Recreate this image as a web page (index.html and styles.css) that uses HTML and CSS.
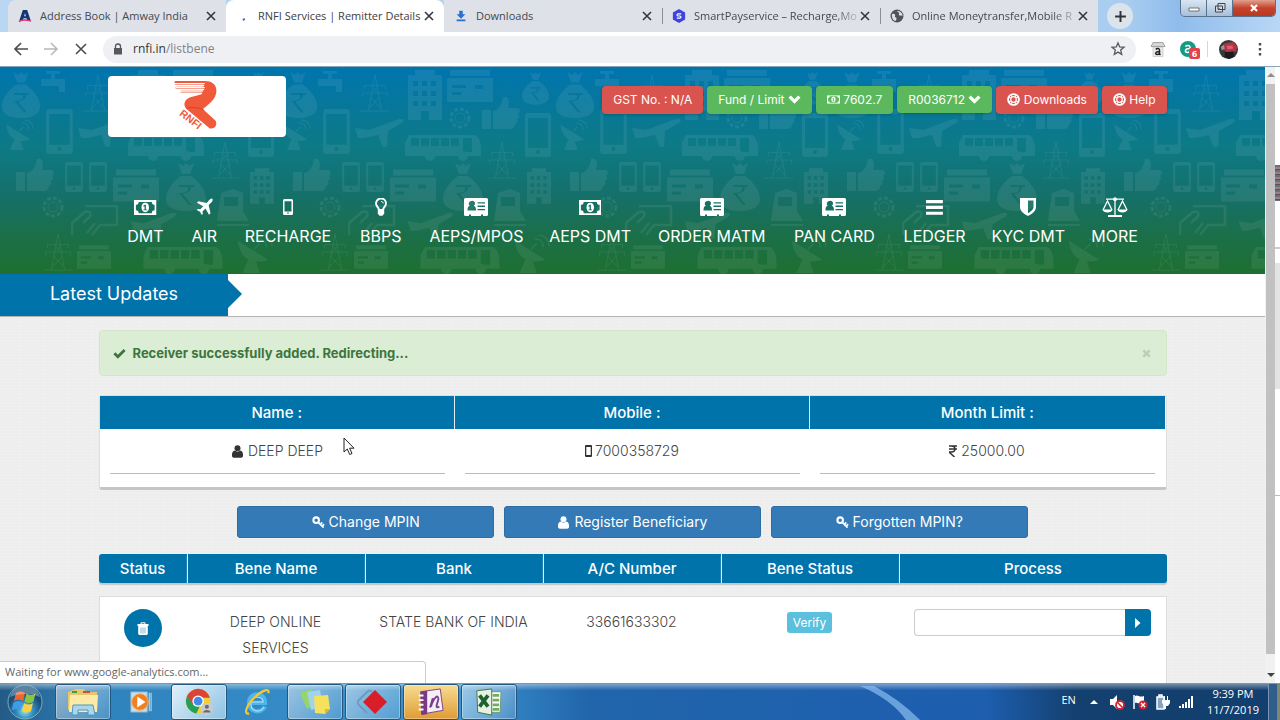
FILE: index.html
```html
<!DOCTYPE html>
<html lang="en">
<head>
<meta charset="utf-8">
<title>RNFI Services | Remitter Details</title>
<link rel="stylesheet" href="styles.css">
</head>
<body>
<svg class="defs" aria-hidden="true">
  <defs>
    <symbol id="money" viewBox="0 0 24 16"><path fill="currentColor" fill-rule="evenodd" d="M0 0h24v16H0zM5 2a3 3 0 0 1-3 3v6a3 3 0 0 1 3 3h14a3 3 0 0 1 3-3V5a3 3 0 0 1-3-3zM12 3c2.600 0 4 2.200 4 5s-1.400 5-4 5-4-2.200-4-5 1.400-5 4-5zM11.400 5L9.800 6.500l.7.8.8-.6V10H10v1h4v-1h-1.300V5z"/></symbol>
    <symbol id="plane" viewBox="0 0 18 18"><path fill="currentColor" d="M17.300.7c.8.8.3 2.500-.7 3.500L13.700 7l1.800 8.300-1.500 1.500-3.500-6.300-3 2.900.3 2.600-1 1-1.800-3.300L1.700 12l1-1 2.600.3 2.900-3L1.900 4.800l1.500-1.500L11.700 5l2.500-2.900c1-1.100 2.500-2 3.100-1.400z"/></symbol>
    <symbol id="mobile" viewBox="0 0 10 16"><path fill="currentColor" fill-rule="evenodd" d="M1.500 0h7A1.500 1.500 0 0 1 10 1.500v13A1.500 1.500 0 0 1 8.500 16h-7A1.500 1.500 0 0 1 0 14.500v-13A1.500 1.500 0 0 1 1.500 0zM1.500 2.300v10.200h7V2.300zM5 13.300a.8.8 0 1 0 0 1.600.8.8 0 0 0 0-1.600z"/></symbol>
    <symbol id="bulb" viewBox="0 0 12 18"><path d="M4 12C4 9.700 1 8.400 1 5.500A5 5 0 0 1 11 5.500C11 8.400 8 9.700 8 12z" fill="none" stroke="currentColor" stroke-width="1.900"/><path d="M6 3.500c1.400 0 2.200.7 2.200 1.900" fill="none" stroke="currentColor"/><path fill="currentColor" d="M2.800 11h6.400v4.500L7.500 17.800h-3l-1.700-2.300z"/></symbol>
    <symbol id="idcard" viewBox="0 0 24 18"><path fill="currentColor" fill-rule="evenodd" d="M1.500 0h21A1.500 1.500 0 0 1 24 1.500v15a1.500 1.500 0 0 1-1.500 1.500H19v-1.500h-2V18H7v-1.500H5V18H1.500A1.500 1.500 0 0 1 0 16.500v-15A1.500 1.500 0 0 1 1.500 0zM7.500 3A2.600 2.600 0 0 0 5.800 7.700C4 8.200 3.500 9.800 3.500 12.500h8.500c0-2.700-.6-4.300-2.300-4.800A2.600 2.600 0 0 0 7.500 3zM13.500 4.300v1.300H21V4.300zm0 3.300v1.300H21V7.600zm0 3.300v1.300H21v-1.300z"/></symbol>
    <symbol id="bars" viewBox="0 0 18 16"><path fill="currentColor" d="M0 0h18v3.400H0zM0 6.200h18v3.400H0zM0 12.400h18v3.400H0z"/></symbol>
    <symbol id="shield" viewBox="0 0 16 18"><path fill="currentColor" fill-rule="evenodd" d="M0 0h16v9c0 4-4.500 7.500-8 9-3.500-1.500-8-5-8-9zM8 2.500v12.700C10.500 14 13.500 11.500 13.500 9V2.500z"/></symbol>
    <symbol id="scale" viewBox="0 0 26 20"><g fill="none" stroke="currentColor" stroke-width="1.300"><path d="M4 2.200h18M13 1v17.500M1 13L5.500 4 10 13M16 13l4.500-9L25 13"/><path d="M6 19h14" stroke-width="2"/></g><circle cx="13" cy="2.200" r="1.900" fill="currentColor"/><path fill="currentColor" d="M.5 12.500h10c-.5 4-9.500 4-10 0zM15.500 12.500h10c-.5 4-9.500 4-10 0z"/></symbol>
    <symbol id="chev" viewBox="0 0 12 9"><path d="M1.500 1.800L6 6.300l4.500-4.500" fill="none" stroke="currentColor" stroke-width="3"/></symbol>
    <symbol id="ring" viewBox="0 0 14 14"><circle cx="7" cy="7" r="5.900" fill="none" stroke="currentColor" stroke-width="1.900"/><circle cx="7" cy="7" r="3" fill="none" stroke="currentColor" stroke-width="1.300"/><path d="M5 1v4M9 1v4M5 9v4M9 9v4M1 5h4M1 9h4M9 5h4M9 9h4" stroke="currentColor"/></symbol>
    <symbol id="check" viewBox="0 0 12 10"><path d="M1.300 4.800l3.200 3.200L10.700 1.700" fill="none" stroke="currentColor" stroke-width="2.600"/></symbol>
    <symbol id="user" viewBox="0 0 12 14"><circle cx="6" cy="3.600" r="3.200" fill="currentColor"/><path fill="currentColor" d="M3 6c2 1.600 4 1.600 6 0 2.400.4 3 3 3 5.500 0 1.500-.9 2.200-2 2.200H2c-1.100 0-2-.7-2-2.200C0 9 .6 6.400 3 6z"/></symbol>
    <symbol id="key" viewBox="0 0 14 14"><circle cx="4.500" cy="4.500" r="3" fill="none" stroke="currentColor" stroke-width="2.200"/><path d="M6.500 6.500l6 6M9 9l2-2.200M11 11l2-2.200" fill="none" stroke="currentColor" stroke-width="1.800"/></symbol>
    <symbol id="trash" viewBox="0 0 12 13"><path d="M4 2V.8h4V2" fill="none" stroke="currentColor"/><path fill="currentColor" d="M.5 2h11v2h-11z"/><path fill="currentColor" d="M1.200 4h9.600v7.600a1.300 1.300 0 0 1-1.300 1.300h-7a1.300 1.300 0 0 1-1.300-1.300z"/><path d="M4 5.500v6M6 5.500v6M8 5.500v6" stroke="#0073aa" stroke-width=".5"/></symbol>
    <symbol id="cross" viewBox="0 0 10 10"><path d="M1 1l8 8M9 1L1 9" stroke="currentColor" stroke-width="1.600"/></symbol>
    <symbol id="globe" viewBox="0 0 14 14"><circle cx="7" cy="7" r="6.500" fill="#505358"/><path fill="#dfe2e8" d="M2 5c2-1 4 .5 3 2s2 1 1.500 3-1.500 2-1.500 2C2.500 11 1.500 8 2 5zM7 2c1 2 3 1 2 3s2 1.500 3.500 2C12.600 4 10 1.500 7 2z"/></symbol>
    <symbol id="pylon" viewBox="0 0 30 40"><path d="M15 1L8 39M15 1l7 38M11 12l9 10M19 12l-9 10M10 24l11 12M20 24L9 36M4 12h22M2 20h26M0 39h30M4 12v4M26 12v4M2 20v4M28 20v4" fill="none" stroke="#fff"/></symbol>
    <symbol id="card" viewBox="0 0 46 32"><path fill="#fff" fill-rule="evenodd" d="M3 0h40v6H3zM0 8h46v24H0zM5 15v3h14v-3zM5 22v3h9v-3zM28 15v4h8v-4z"/></symbol>
    <symbol id="bag" viewBox="0 0 40 48"><path fill="#fff" fill-rule="evenodd" d="M12 0l5 3 3-3 3 3 5-3-4 11h-8zM15 13h10c8 6 15 14 15 23 0 8-8 12-20 12S0 44 0 36c0-9 7-17 15-23zM13 22v2h9c1 5-3 6-9 6l10 12h3l-9-11c5-1 8-3 8-7h3v-2z"/></symbol>
    <symbol id="phone" viewBox="0 0 26 44"><path fill="#fff" fill-rule="evenodd" d="M3 0h20a3 3 0 0 1 3 3v38a3 3 0 0 1-3 3H3a3 3 0 0 1-3-3V3a3 3 0 0 1 3-3zM3 5v30h20V5zM13 37a2 2 0 1 0 0 4 2 2 0 0 0 0-4z"/></symbol>
    <symbol id="tower" viewBox="0 0 34 50"><path fill="#fff" fill-rule="evenodd" d="M7 0h20v5h7v45H0V5h7zM5 11v5h5v-5zm9 0v5h5v-5zm9 0v5h5v-5zM5 21v5h5v-5zm9 0v5h5v-5zm9 0v5h5v-5zM5 31v5h5v-5zm9 0v5h5v-5zm9 0v5h5v-5zM13 41v9h8v-9z"/></symbol>
    <symbol id="bus" viewBox="0 0 76 26"><path fill="#fff" fill-rule="evenodd" d="M4 0h66c4 2 6 8 6 14v7H0V8zM6 3v8h8V3zm10 0v8h8V3zm10 0v8h8V3zm10 0v8h8V3zm10 0v8h8V3zm12 0v14h9V3z"/><circle cx="25" cy="21" r="5" fill="#fff"/><circle cx="58" cy="21" r="5" fill="#fff"/></symbol>
    <symbol id="jet" viewBox="0 0 50 28"><path fill="#fff" d="M0 9l14 2L44 0c5-1 6 2 3 4L33 12l-1 16-4 1-5-13-14 3H3z"/></symbol>
    <symbol id="thumb" viewBox="0 0 38 34"><path fill="#fff" d="M0 14h9v19H0zM11 15c6-1 9-7 10-14 6-2 7 5 5 11h10c3 2 2 5 0 6 2 2 1 4-1 5 1 3 0 4-2 5 0 4-3 5-6 5H11z"/></symbol>
    <symbol id="dish" viewBox="0 0 40 40"><path fill="#fff" d="M3 6c2 18 14 26 32 20zM14 26l8 2 4 12H8z"/><path d="M20 15l6-6M24 4c6 0 9 4 9 9M27 0c8 0 12 6 12 12" fill="none" stroke="#fff" stroke-width="1.500"/></symbol>
    <symbol id="gear" viewBox="0 0 24 24"><circle cx="12" cy="12" r="9" fill="none" stroke="#fff" stroke-width="3" stroke-dasharray="4 2"/><circle cx="12" cy="12" r="5" fill="none" stroke="#fff"/></symbol>
    <symbol id="train" viewBox="0 0 32 38"><path fill="#fff" fill-rule="evenodd" d="M4 4L16 0l10 4v18l6 10H0zM7 8v9h14V8z"/><path d="M0 36h32" stroke="#fff" stroke-width="2"/></symbol>
    <symbol id="hand" viewBox="0 0 48 32"><path d="M14 1h32v19H28M1 30V18L14 7c7-2 7 4 2 7l-4 4M24 18l-8 10M29 20l-8 10" fill="none" stroke="#fff" stroke-width="2.500"/></symbol>
    <pattern id="services" x="23" y="0" width="277" height="208" patternUnits="userSpaceOnUse">
      <path fill="#fff" d="M18 12h24v13h-6v-6H18zM28 4h4v8h-4zM23 4h14v3H23z"/>
      <use href="#pylon" x="60" y="7" width="30" height="38"/><use href="#tower" x="108" y="3" width="34" height="50"/>
      <use href="#card" x="147" y="3" width="46" height="32"/><use href="#bag" x="222" y="5" width="27" height="33"/>
      <use href="#bag" x="255" y="5" width="40" height="46"/><use href="#bag" x="-22" y="5" width="40" height="46"/>
      <use href="#phone" x="23" y="42" width="27" height="45"/><use href="#jet" x="55" y="52" width="50" height="28"/>
      <use href="#gear" x="148" y="39" width="24" height="24"/><use href="#thumb" x="182" y="29" width="38" height="34"/>
      <use href="#phone" x="225" y="46" width="26" height="44"/><use href="#dish" x="258" y="50" width="30" height="36"/><use href="#dish" x="-19" y="50" width="30" height="36"/>
      <use href="#bus" x="105" y="68" width="76" height="26"/><use href="#pylon" x="187" y="74" width="30" height="38"/>
      <use href="#thumb" x="270" y="91" width="38" height="34"/><use href="#thumb" x="-7" y="91" width="38" height="34"/>
      <use href="#phone" x="42" y="95" width="18" height="30"/><use href="#phone" x="66" y="95" width="18" height="30"/>
      <use href="#card" x="90" y="102" width="46" height="33"/><use href="#bag" x="143" y="96" width="40" height="48"/>
      <use href="#tower" x="227" y="100" width="24" height="38"/><use href="#train" x="194" y="122" width="32" height="38"/>
      <use href="#gear" x="18" y="128" width="24" height="24"/><use href="#hand" x="48" y="138" width="48" height="32"/>
      <use href="#jet" x="107" y="146" width="48" height="26"/><use href="#pylon" x="20" y="166" width="30" height="38"/>
      <use href="#card" x="54" y="178" width="34" height="24"/><use href="#bus" x="117" y="180" width="86" height="27"/>
      <use href="#dish" x="212" y="168" width="38" height="38"/>
    </pattern>
  </defs>
</svg>

<div class="window">
  <div class="tabstrip">
    <div class="tab first"><svg class="fav" viewBox="0 0 16 16"><path fill="#12376f" fill-rule="evenodd" d="M5.500 1h5l4 12h-4l-.7-2.300H6.300L5.500 13H1.500zM8 4.500L7 8.300h2z"/><path d="M1 14.500c5-3 9-2 14-.7" stroke="#e0316b" stroke-width="1.500" fill="none"/></svg><span>Address Book | Amway India</span><button aria-label="Close tab"><svg viewBox="0 0 10 10"><use href="#cross"/></svg></button></div>
    <div class="tab active"><svg class="fav" viewBox="0 0 16 16"><path d="M8 13l2-2" stroke="#3367c9" stroke-width="2"/></svg><span>RNFI Services | Remitter Details</span><button aria-label="Close tab"><svg viewBox="0 0 10 10"><use href="#cross"/></svg></button></div>
    <div class="tab"><svg class="fav" viewBox="0 0 16 16"><path fill="#2a6fd0" d="M6 2h4v4h3L8 11 3 6h3zM3 12h10v2H3z"/></svg><span>Downloads</span><button aria-label="Close tab"><svg viewBox="0 0 10 10"><use href="#cross"/></svg></button></div>
    <div class="tab line"><svg class="fav" viewBox="0 0 16 16"><path fill="#3d45dd" d="M8 0l7 4v8l-7 4-7-4V4z"/><path d="M10.500 5.500H7a1.200 1.200 0 0 0 0 2.500h2a1.200 1.200 0 0 1 0 2.500H5.500" stroke="#fff" stroke-width="1.300" fill="none"/></svg><span class="fade">SmartPayservice – Recharge,Mo</span><button aria-label="Close tab"><svg viewBox="0 0 10 10"><use href="#cross"/></svg></button></div>
    <div class="tab line"><svg class="fav" viewBox="0 0 14 14"><use href="#globe"/></svg><span class="fade">Online Moneytransfer,Mobile R</span><button aria-label="Close tab"><svg viewBox="0 0 10 10"><use href="#cross"/></svg></button></div>
    <button class="newtab" aria-label="New tab"><svg viewBox="0 0 12 12"><path d="M6 1v10M1 6h10" stroke="#333" stroke-width="1.800"/></svg></button>
    <div class="winctl">
      <button aria-label="Minimize"><svg viewBox="0 0 14 12"><path d="M2 6h10v3H2z" fill="#fff" stroke="#555" stroke-width=".8"/></svg></button><button aria-label="Restore"><svg viewBox="0 0 14 12"><path d="M5 1.500h7v6H5zM2.500 4h7v6h-7z" fill="#cfdbe8" stroke="#444"/><path d="M5 6.500h2v1.500H5z" fill="#444"/></svg></button><button class="close" aria-label="Close"><svg viewBox="0 0 14 12"><path d="M4 3l6 6M10 3L4 9" stroke="#fff" stroke-width="2.200"/></svg></button>
    </div>
  </div>

  <div class="toolbar">
    <button aria-label="Back"><svg viewBox="0 0 16 16"><path d="M15 8H2M8 2L2 8l6 6" fill="none" stroke="#4a4d51" stroke-width="1.700"/></svg></button>
    <button aria-label="Forward"><svg viewBox="0 0 16 16"><path d="M1 8h13M8 2l6 6-6 6" fill="none" stroke="#b5b7ba" stroke-width="1.500"/></svg></button>
    <button aria-label="Stop"><svg viewBox="0 0 16 16"><path d="M3 3l10 10M13 3L3 13" stroke="#4a4d51" stroke-width="1.600"/></svg></button>
    <div class="omnibox">
      <svg class="lock" viewBox="0 0 10 12"><path d="M2.500 5V3.500a2.500 2.500 0 0 1 5 0V5" fill="none" stroke="#55585c" stroke-width="1.300"/><path fill="#55585c" d="M1 5h8v6.500H1z"/></svg>
      <span class="url">rnfi.in<i>/listbene</i></span>
      <svg class="star" viewBox="0 0 16 16"><path d="M8 2l1.700 4 4.300.3-3.300 2.800 1 4.300L8 11.100l-3.700 2.300 1-4.300L2 6.300 6.300 6z" fill="none" stroke="#55585c" stroke-width="1.300"/></svg>
    </div>
    <button aria-label="Amazon shop"><svg viewBox="0 0 16 16"><path fill="#e9e9e9" stroke="#bbb" stroke-width=".6" d="M3 6h10v9.500H3z"/><path fill="#d6d6d6" stroke="#888" stroke-width=".7" d="M3 1.500h10l2 4H1z"/><path d="M5.800 8.500c1-1.300 3.700-1.300 3.700.5v4l1 .8M9.500 10.500c-4.500-.2-4.700 3-2.300 3 1.400 0 2.300-1 2.300-2" stroke="#222" stroke-width="1.500" fill="none"/></svg></button>
    <button class="assist" aria-label="Assistant, 6 new"><svg viewBox="0 0 16 16"><circle cx="8" cy="8" r="8" fill="#159b83"/><path d="M5.500 5.500c1-1.500 4.500-1.500 4.500.5v4.500l1 1M10 7.500c-5.500-.2-5.700 4-2.700 4 1.700 0 2.700-1.200 2.700-2.200" stroke="#fff" stroke-width="1.500" fill="none"/></svg><span class="badge">6</span></button>
    <span class="sep"></span>
    <button aria-label="Profile"><svg class="avatar" viewBox="0 0 20 20"><circle cx="10" cy="10" r="10" fill="#39383c"/><path fill="#b43642" d="M5 4l10-2 4 5-1 5-9 1-5-3z"/><path fill="#d9607a" d="M8 6h6l1 3-6 1z"/><path fill="#1c1b22" d="M6 13l9-1 1 5-5 3-5-2z"/><path fill="#8f9a9c" d="M2 7l3-2 1 4-3 2z"/></svg></button>
    <button aria-label="Menu"><svg viewBox="0 0 16 16"><path d="M8 2v2.500M8 7v2.500M8 12v2.500" stroke="#4a4d51" stroke-width="2.400"/></svg></button>
  </div>

  <div class="viewport">
    <div class="page">
      <header class="hero">
        <svg class="wallpaper" aria-hidden="true"><rect width="100%" height="100%" fill="url(#services)"/></svg>
        <div class="wrap">
          <div class="top">
            <a class="logo" href="#" aria-label="RNFI"><svg viewBox="0 0 50 54"><g fill="#f0593a"><path d="M4 1h30c9 0 13 5 12 12-1 6-5 10-10 14l-4 3 13 12c3 4-1 10-6 8L15 30c-4-4-2-10 4-12l11-3c2-1 2-2 0-2H10c-2 0-2-1.500 0-2h22c2 0 2-2 0-2H5c-2 0-2-1.500 0-2h27c2 0 2-2 0-2H4C2 5 2 1 4 1z"/></g><path d="M2 3.800h32M4 7.800h30M7 11.600h25" stroke="#fff" stroke-width="1.300"/><path d="M15 29c8-1 14 0 18 2" stroke="#d9432c" fill="none"/><text x="7" y="36" transform="rotate(38 7 36)" class="logotext">RNFI</text></svg></a>
            <div class="pills">
              <button class="red">GST No. : N/A</button>
              <button>Fund / Limit <svg class="i12" viewBox="0 0 12 9"><use href="#chev"/></svg></button>
              <button><svg class="i12" viewBox="0 0 24 16"><use href="#money"/></svg> 7602.7</button>
              <button class="short">R0036712 <svg class="i12" viewBox="0 0 12 9"><use href="#chev"/></svg></button>
              <button class="red"><svg class="i12" viewBox="0 0 14 14"><use href="#ring"/></svg> Downloads</button>
              <button class="red"><svg class="i12" viewBox="0 0 14 14"><use href="#ring"/></svg> Help</button>
            </div>
          </div>
          <nav class="menu">
            <a href="#"><svg class="bill" viewBox="0 0 24 16"><use href="#money"/></svg>DMT</a>
            <a href="#"><svg viewBox="0 0 18 18"><use href="#plane"/></svg>AIR</a>
            <a href="#"><svg class="cell" viewBox="0 0 10 16"><use href="#mobile"/></svg>RECHARGE</a>
            <a href="#"><svg viewBox="0 0 12 18"><use href="#bulb"/></svg>BBPS</a>
            <a href="#"><svg viewBox="0 0 24 18"><use href="#idcard"/></svg>AEPS/MPOS</a>
            <a href="#"><svg class="bill" viewBox="0 0 24 16"><use href="#money"/></svg>AEPS DMT</a>
            <a href="#"><svg viewBox="0 0 24 18"><use href="#idcard"/></svg>ORDER MATM</a>
            <a href="#"><svg viewBox="0 0 24 18"><use href="#idcard"/></svg>PAN CARD</a>
            <a href="#"><svg class="bill" viewBox="0 0 18 16"><use href="#bars"/></svg>LEDGER</a>
            <a href="#"><svg viewBox="0 0 16 18"><use href="#shield"/></svg>KYC DMT</a>
            <a href="#"><svg class="wide" viewBox="0 0 26 20"><use href="#scale"/></svg>MORE</a>
          </nav>
        </div>
      </header>

      <div class="news"><h2>Latest Updates</h2></div>

      <main class="wrap">
        <div class="alert" role="status"><svg class="i12" viewBox="0 0 12 10"><use href="#check"/></svg><strong>Receiver successfully added. Redirecting...</strong><button aria-label="Dismiss"><svg viewBox="0 0 10 10"><path d="M1.500 1.500l7 7M8.500 1.500l-7 7" stroke="currentColor" stroke-width="2.600"/></svg></button></div>

        <div class="panel">
          <table class="info">
            <thead><tr><th>Name :</th><th>Mobile :</th><th>Month Limit :</th></tr></thead>
            <tbody><tr>
              <td><div><svg class="i12" viewBox="0 0 12 14"><use href="#user"/></svg> DEEP DEEP</div></td>
              <td><div><svg class="phone" viewBox="0 0 8 13"><path fill="currentColor" fill-rule="evenodd" d="M1 0h5a1 1 0 0 1 1 1v10a1 1 0 0 1-1 1H1a1 1 0 0 1-1-1V1a1 1 0 0 1 1-1zM1.300 2v8h4.400V2z"/></svg>7000358729</div></td>
              <td><div><svg class="rupee" viewBox="0 0 8 12"><path d="M0 1h8M0 4h8M0 1h2.500c4.500 0 4.500 6 0 6H0l5.500 5" fill="none" stroke="currentColor" stroke-width="1.500"/></svg> 25000.00</div></td>
            </tr></tbody>
          </table>
        </div>

        <div class="actions">
          <button><svg class="i12" viewBox="0 0 14 14"><use href="#key"/></svg> Change MPIN</button>
          <button><svg class="i12" viewBox="0 0 12 14"><use href="#user"/></svg> Register Beneficiary</button>
          <button><svg class="i12" viewBox="0 0 14 14"><use href="#key"/></svg> Forgotten MPIN?</button>
        </div>

        <table class="bene">
          <colgroup><col class="c1"><col class="c2"><col class="c2"><col class="c2"><col class="c2"><col class="c3"></colgroup>
          <thead><tr><th>Status</th><th>Bene Name</th><th>Bank</th><th>A/C Number</th><th>Bene Status</th><th>Process</th></tr></thead>
          <tbody><tr>
            <td><button class="del" aria-label="Delete beneficiary"><svg viewBox="0 0 12 13"><use href="#trash"/></svg></button></td>
            <td>DEEP ONLINE SERVICES</td>
            <td>STATE BANK OF INDIA</td>
            <td>33661633302</td>
            <td><button class="verify">Verify</button></td>
            <td><div class="pay"><input type="text" aria-label="Amount"><button aria-label="Send"><svg viewBox="0 0 6 10"><path fill="#fff" d="M0 0l5.500 5L0 10z"/></svg></button></div></td>
          </tr></tbody>
        </table>
      </main>
      <svg class="cursor" viewBox="0 0 12 19" aria-hidden="true"><path d="M1 1v14l3.300-3 2.400 5.500 2.300-1-2.400-5.300H11z" fill="#fff" stroke="#222"/></svg>
    </div>
    <div class="scroll" aria-hidden="true"><span class="up"></span><span class="thumb"></span><span class="down"></span></div>
    <div class="behind" aria-hidden="true"></div>
    <div class="status">Waiting for www.google-analytics.com...</div>
  </div>
</div>

<footer class="taskbar">
  <button class="start" aria-label="Start"><svg viewBox="0 0 36 36"><defs><radialGradient id="orb" cy=".75"><stop offset="0" stop-color="#8ff2f6"/><stop offset=".5" stop-color="#338bbd"/><stop offset="1" stop-color="#174e7c"/></radialGradient></defs><circle cx="18" cy="18" r="17" fill="url(#orb)" stroke="#a5cbd6" stroke-width=".7"/><path fill="#ee6532" d="M9 9c3-2 6-2 9 0l-2 8c-3-2-6-2-9 0z"/><path fill="#8cc63e" d="M19.500 9.500c3 2 6 2 9 0l-2 8c-3 2-6 2-9 0z"/><path fill="#3d9ee5" d="M6.500 18.500c3-2 6-2 9 0l-2 8c-3-2-6-2-9 0z"/><path fill="#fdd045" d="M17 19c3 2 6 2 9 0l-2 8c-3 2-6 2-9 0z"/><path fill="#fff" opacity=".3" d="M3 13c4-16 26-16 30 0-9-4-21-4-30 0z"/></svg></button>
  <button class="open" aria-label="Explorer"><svg viewBox="0 0 32 28"><path fill="#e8c66b" d="M1 4l8-3h8l2 3h11v18H1z"/><path fill="#fbeba6" d="M3 7h28l-1 17H2z"/><path d="M5 4h5" stroke="#3a9c45" stroke-width="2"/><path d="M16 4h7" stroke="#cf4e3b" stroke-width="2"/><path fill="#a8d7ee" stroke="#5494bd" d="M6 17h20l2 10h-7v-5H11v5H5z"/></svg></button>
  <button aria-label="Media Player"><svg class="wmp" viewBox="0 0 28 26"><path fill="#c3dff0" stroke="#7da7c5" d="M3 2h18v22H3z"/><path d="M23 3v20M25 3v20" stroke="#d6eaf5"/><circle cx="13" cy="13" r="9" fill="#ef801f" stroke="#f9b066"/><path fill="#fff" d="M10 7l9 6-9 6z"/></svg></button>
  <button class="open bright" aria-label="Chrome"><svg viewBox="0 0 32 32"><circle cx="15" cy="15" r="14" fill="#f5ce31"/><path fill="#db4437" d="M2 10a14 14 0 0 1 26.500 1H15L9 19z"/><path fill="#24a05a" d="M2.500 9L10 20l7 .5L13 29A14 14 0 0 1 2.500 9z"/><circle cx="15" cy="15" r="6.500" fill="#fff"/><circle cx="15" cy="15" r="5" fill="#4389eb"/><circle cx="25" cy="24" r="7" fill="#c9cbce"/><circle cx="25" cy="21.500" r="2.300" fill="#6a6c70"/><path fill="#6a6c70" d="M20.500 28c.5-4 8.500-4 9 0z"/></svg></button>
  <button aria-label="Internet Explorer"><svg viewBox="0 0 32 32"><path d="M25 21c-4 9-18 7-18-4 0-13 19-13 18 0H8" fill="none" stroke="#4db4ec" stroke-width="5"/><path d="M24 22c-5 7-15 5-15-4 0-9 14-10 14-2H10" fill="none" stroke="#b4e6fc" stroke-width="1.200"/><path d="M7 29c-6 2-4-8 5-17S31-1 29 6" fill="none" stroke="#f3c832" stroke-width="2.500"/></svg></button>
  <button class="open" aria-label="Sticky Notes"><svg viewBox="0 0 32 28"><path fill="#97d56a" d="M1 5l11-4 6 14-10 6z"/><path fill="#9fd3f2" d="M8 4l13-2 3 17-12 3z"/><path fill="#f6e15f" d="M15 8l14-1 2 14-5 5-10-1z"/><path fill="#d6b93e" d="M26 26v-5h5z"/></svg></button>
  <button class="open" aria-label="Remote support"><svg viewBox="0 0 32 28"><path d="M15 4c-2-2-3-2-5 0L2 12c-2 2-2 3 0 5l8 8" fill="none" stroke="#6d9bc0" stroke-width="2"/><path fill="#d91d29" d="M18 2l12 12-12 12L6 14z"/></svg></button>
  <button class="open note" aria-label="OneNote"><svg viewBox="0 0 32 30"><path fill="#f4eef6" stroke="#76417f" d="M5 4l21-3 3 23-23 4z"/><path fill="#783b83" d="M5 4l7-1v25l-6 1z"/><path d="M3 8h5M3 13h5M3 18h5M3 23h5" stroke="#fff" stroke-width="2"/><path d="M15 21l3-10c0 3-1 6-2 9 3-10 8-14 8-8l-2 7c0 2 1 2 3 1" fill="none" stroke="#7f3d8b" stroke-width="2"/></svg></button>
  <button class="open" aria-label="Excel"><svg viewBox="0 0 32 30"><path fill="#fff" stroke="#67956c" d="M9 4h20l-1 22H9z"/><path d="M20 8h7M20 13h7M20 18h7M20 23h7" stroke="#72ac61" stroke-width="3"/><path fill="#e6f1df" stroke="#40713f" d="M3 3l16-2v28L4 26z"/><path d="M6 8l9 12M15 8L6 20" stroke="#1f6232" stroke-width="4"/></svg></button>
  <svg class="beam" viewBox="0 0 80 37" preserveAspectRatio="none" aria-hidden="true"><path d="M2 2h14q26 14 46 35H48Q34 16 2 2z" fill="#8abdf0" opacity=".7"/></svg>
  <div class="tray">
    <span class="lang">EN</span>
    <svg viewBox="0 0 16 16"><path fill="#fff" d="M4 10l4-4 4 4z"/></svg>
    <svg viewBox="0 0 16 16"><path fill="#fff" d="M1 5h3l4-4v14l-4-4H1z"/><circle cx="11" cy="11" r="4" fill="#fff" stroke="#d32330" stroke-width="1.800"/><path d="M8.500 8.500l5 5" stroke="#d32330" stroke-width="1.600"/></svg>
    <svg viewBox="0 0 16 16"><path d="M2 1v14" stroke="#fff" stroke-width="1.500"/><path fill="#fff" d="M3 2c3-2 4 2 9 0v7c-5 2-6-1-9 0z"/><circle cx="11" cy="11" r="4.500" fill="#d32330"/><path d="M9 9l4 4M13 9l-4 4" stroke="#fff" stroke-width="1.300"/></svg>
    <svg viewBox="0 0 16 16"><path fill="#87a4c3" stroke="#fff" stroke-width="1.500" d="M2 3h7v12H2zM4 1h3v2H4z"/><path fill="#fff" d="M7 6h8v3l-2 3h-2v3h-2v-4L7 9zM9 2h1v4H9zM12 2h1v4h-1z"/></svg>
    <svg viewBox="0 0 16 16"><path d="M2 14v-2M5 14v-4M8 14V8M11 14V5M14 14V2" stroke="#fff" stroke-width="2"/></svg>
    <time class="clock">9:39 PM<br>11/7/2019</time>
  </div>
  <button class="desk" aria-label="Show desktop"></button>
</footer>
</body>
</html>
```
FILE: styles.css
```css
* { box-sizing: border-box; }
body {
  margin: 0;
  height: 100vh;
  display: flex;
  flex-direction: column;
  overflow: hidden;
  font: 14px/20px Inter, "Liberation Sans", sans-serif;
  color: #555;
}
button { border: 0; padding: 0; background: none; font: inherit; color: inherit; }
a { color: inherit; text-decoration: none; }
.defs { position: absolute; width: 0; height: 0; }
.i12 { width: 13px; height: 13px; vertical-align: -2px; }

.window { flex: 1; min-height: 0; display: flex; flex-direction: column; }

/* Browser tabs */
.tabstrip {
  display: flex;
  height: 32px;
  padding-left: 8px;
  background: linear-gradient(90deg, #b9d7f2, #a9cdf0 88%, #8fbcec 92%, #b9d7f5);
  font: 11px/16px "Open Sans", sans-serif;
  color: #45484d;
}
.tab {
  flex: 0 1 218px;
  min-width: 0;
  display: flex;
  align-items: center;
  gap: 2px;
  padding: 0 10px;
  background: #dee1e8;
}
.tab.first { border-radius: 8px 0 0 0; }
.tab.active { background: #fff; border-radius: 8px 8px 0 0; color: #3c4043; }
.tab.line { background: linear-gradient(#8b8e94, #8b8e94) 0 8px / 1px 16px no-repeat #dee1e8; }
.tab span { flex: 1; overflow: hidden; white-space: nowrap; }
.tab .fade { -webkit-mask-image: linear-gradient(90deg, #000 85%, rgba(0,0,0,.2)); mask-image: linear-gradient(90deg, #000 85%, rgba(0,0,0,.2)); }
.tab .fav { width: 14px; height: 14px; flex: none; margin-right: 6px; }
.tab button { width: 10px; height: 10px; display: flex; color: #33363a; }
.newtab { width: 26px; height: 26px; margin: 3px 9px; border-radius: 50%; background: #dde3ea; display: grid; place-items: center; }
.newtab svg { width: 13px; }
.winctl { display: flex; height: 17px; margin-left: auto; margin-right: 4px; border: 1px solid #56728f; border-top: 0; border-radius: 0 0 5px 5px; overflow: hidden; }
.winctl button { width: 26px; display: grid; place-items: center; background: linear-gradient(#d8e6f3, #a6bfd8); border-right: 1px solid #56728f; }
.winctl .close { width: 42px; border: 0; background: linear-gradient(#e1a08f, #c5432b 50%, #b93820); }
.winctl svg { width: 14px; height: 12px; }

/* Address bar */
.toolbar {
  display: flex;
  align-items: center;
  gap: 14px;
  height: 35px;
  padding: 0 12px 0 13px;
  background: #fff;
  border-bottom: 1px solid #86a5b8;
}
.toolbar button { flex: none; display: flex; }
.toolbar button svg { width: 16px; height: 16px; }
.toolbar button .avatar { width: 19px; height: 19px; }
.omnibox { flex: 1; display: flex; align-items: center; height: 27px; padding: 0 10px; border-radius: 14px; background: #eff0f4; }
.lock { width: 10px; height: 12px; margin-right: 10px; }
.star { width: 16px; height: 16px; margin-left: auto; }
.url { font: 12px/18px "Open Sans", sans-serif; color: #303338; }
.url i { font-style: normal; color: #808388; }
.assist { position: relative; }
.badge { position: absolute; left: 9px; top: 7px; padding: 0 3px; background: #e2434b; color: #fff; border-radius: 2px; font: 700 9px/11px "Open Sans", sans-serif; }
.sep { width: 1px; height: 16px; background: #d5d7da; margin: 0 -3px; }

/* Page viewport */
.viewport { flex: 1; min-height: 0; display: flex; position: relative; overflow: hidden; }
.page {
  flex: 1;
  min-width: 0;
  position: relative;
  background: repeating-linear-gradient(0deg, rgba(255,255,255,.12) 0 1px, transparent 1px 3px), repeating-linear-gradient(90deg, rgba(255,255,255,.12) 0 1px, transparent 1px 3px), #ededed;
}
.wrap { max-width: 1068px; margin: 0 auto; position: relative; }
.scroll { width: 10px; display: flex; flex-direction: column; align-items: center; background: #f1f1f1; padding: 6px 0 6px 1px; gap: 7px; }
.scroll .up, .scroll .down { border: 4px solid transparent; flex: none; }
.scroll .up { border-top: 0; border-bottom-color: #8d8d8d; }
.scroll .down { border-bottom: 0; border-top-color: #444; margin-top: 12px; }
.scroll .thumb { flex: 1; width: 100%; background: #c1c1c1; }
.behind {
  width: 5px;
  background:
    repeating-linear-gradient(#6a6f7c 0 2px, #a57a86 2px 4px, #4b5a52 4px 5px) 0 98px / 100% 36px no-repeat,
    linear-gradient(#ccc, #ccc) 0 180px / 100% 2px no-repeat,
    linear-gradient(#e3e3e3, #e3e3e3) 0 196px / 100% 126px no-repeat,
    linear-gradient(#bbb, #bbb) 0 428px / 100% 1px no-repeat,
    #fff;
}

/* Site header */
.hero { position: relative; height: 207px; background: linear-gradient(#0075ae, #0d7a86 38%, #15706a 62%, #1c6f45 84%, #1e6f30); color: #fff; }
.wallpaper { position: absolute; inset: 0; width: 100%; height: 100%; opacity: .07; }
.top { display: flex; justify-content: space-between; align-items: flex-start; padding: 9px 0 0 9px; }
.logo { display: flex; justify-content: center; width: 178px; height: 61px; padding: 4px 0; background: #fff; border-radius: 4px; }
.logo svg { height: 52px; }
.logotext { font: 700 11px "Liberation Sans", sans-serif; fill: #f0593a; }
.pills { display: flex; align-items: flex-start; gap: 4px; padding-top: 10px; }
.pills button { height: 28px; padding: 0 11px; border-radius: 4px; background: #5cb85c; font-size: 12px; line-height: 28px; white-space: nowrap; box-shadow: 0 1px 3px rgba(0,0,0,.2); }
.pills button.short { height: 27px; line-height: 27px; }
.pills button.red { background: #d9534f; }
.menu {
  display: grid;
  grid-template-columns: 64fr 54fr 114fr 72fr 120fr 108fr 136fr 110fr 91fr 97fr 76fr;
  padding: 61px 14px 0 15px;
  font-size: 16px;
  line-height: 20px;
}
.menu a { display: grid; grid-template-rows: 18px 20px; place-items: center; gap: 10px; white-space: nowrap; }
.menu svg { height: 18px; }
.menu .bill { height: 15px; }
.menu .cell { height: 16px; }
.menu .wide { height: 20px; }

.news { height: 43px; background: #fff; border-bottom: 1px solid #b5b5b5; }
.news h2 { position: relative; width: 228px; height: 42px; margin: 0; background: #0073aa; color: #fff; font-size: 18px; line-height: 40px; font-weight: 400; text-align: center; }
.news h2::after { content: ""; position: absolute; left: 100%; top: 6px; border: 14px solid transparent; border-left-color: #0073aa; border-right: 0; }

.alert { display: flex; align-items: center; gap: 7px; height: 46px; margin-top: 13px; padding: 0 15px 0 13px; background: #dcedd5; border: 1px solid #d3e7c8; border-radius: 4px; color: #3c763d; font-size: 13px; }
.alert button { margin-left: auto; color: #bccdb6; }
.alert button svg { width: 9px; height: 9px; display: block; }

.panel { margin-top: 19px; padding-right: 1px; background: #fff; border: 1px solid #ddd; border-bottom: 3px solid #c5c5c5; border-radius: 3px; }
table { width: 100%; table-layout: fixed; text-align: center; }
th { background: #0073aa; color: #fff; font-size: 15px; font-weight: 500; }
th + th { border-left: 1px solid #e6eff5; }
.info { border-collapse: collapse; }
.info th { height: 33px; padding: 0; }
.info td { padding: 0 10px 13px; font-size: 14px; font-weight: 300; color: #444; }
.info td div { padding: 12px 0; border-bottom: 1px solid #bbb; }
.info svg { color: #333; }
.phone { width: 8px; height: 13px; vertical-align: -2px; margin-right: 2px; }
.rupee { width: 8px; height: 12px; vertical-align: -1px; }

.actions { display: grid; grid-template-columns: repeat(3, 1fr); gap: 10px; width: 74%; margin: 16px auto 0; }
.actions button { height: 32px; border-radius: 3px; background: #337ab7; border: 1px solid #2e6da4; color: #fff; font-size: 14px; }

.bene { border-spacing: 0 13px; margin-top: 3px; }
.c1 { width: 88px; } .c2 { width: 178px; }
.bene th { height: 29px; padding: 0; box-shadow: 0 2px 1px #c2c8cc; }
.bene th:first-child { border-radius: 3px 0 0 3px; }
.bene th:last-child { border-radius: 0 3px 3px 0; }
.bene td { height: 130px; padding: 12px; vertical-align: top; background: #fff; border-top: 1px solid #ddd; line-height: 26px; font-size: 14px; font-weight: 300; color: #444; }
.bene td:first-child { border-left: 1px solid #ddd; }
.bene td:last-child { border-right: 1px solid #ddd; padding: 12px 15px; }
.del { width: 38px; height: 38px; border-radius: 50%; background: #0073aa; color: #fff; }
.del svg { width: 12px; height: 13px; display: block; margin: auto; }
.verify { height: 21px; padding: 0 6px; border-radius: 3px; background: #5bc0de; color: #fff; font-size: 12px; font-weight: 400; line-height: 21px; }
.pay { display: flex; height: 27px; }
.pay input { flex: 1; min-width: 0; border: 1px solid #ccc; border-right: 0; border-radius: 4px 0 0 4px; background: #fff; }
.pay button { width: 26px; background: #0073aa; border-radius: 0 4px 4px 0; }
.pay svg { width: 6px; height: 10px; display: block; margin: auto; }

.cursor { position: absolute; left: 343px; top: 370px; width: 12px; height: 19px; }
.status { position: absolute; left: 0; bottom: 0; width: 426px; height: 22px; padding-left: 5px; background: #fff; border: 1px solid #ccc; border-left: 0; border-bottom: 0; border-radius: 0 4px 0 0; font: 11px/20px "Open Sans", sans-serif; color: #666; }

/* Taskbar */
.taskbar {
  position: relative;
  flex: none;
  display: flex;
  gap: 2px;
  height: 37px;
  padding-left: 5px;
  border-top: 1px solid #7d98ac;
  background: linear-gradient(rgba(255,255,255,.4), transparent 18%), linear-gradient(90deg, #245b86, #2f83bd 8%, #3c93cf 36%, #2165ab 46%, #1d5eaf 77%, #14406f 84%, #133f70);
  color: #fff;
}
.taskbar > button { width: 56px; flex: none; display: grid; place-items: center; }
.taskbar > button svg { height: 28px; max-width: 34px; }
.taskbar > button .wmp { height: 24px; }
.taskbar > .start { width: 40px; margin-right: 8px; }
.taskbar > .start svg { height: 36px; max-width: 36px; }
.taskbar .open { border: 1px solid #24577e; border-radius: 3px; background: linear-gradient(135deg, rgba(255,255,255,.5), rgba(255,255,255,.12)); box-shadow: inset 0 0 0 1px rgba(255,255,255,.35); }
.taskbar .bright { background: linear-gradient(135deg, #e1f0f9, #8cc2e3); }
.taskbar .note { background: linear-gradient(#f7dc91, #e09b35); }
.beam { position: absolute; left: 67%; top: 0; width: 80px; height: 100%; }
.tray { display: flex; align-items: center; gap: 7px; margin-left: auto; font: 11px/16px "Open Sans", sans-serif; }
.tray svg { width: 16px; height: 16px; }
.lang { margin-right: 3px; padding-bottom: 5px; }
.clock { margin: 0 7px 0 6px; text-align: center; }
.taskbar > .desk { width: 12px; border-left: 1px solid #7796b3; background: linear-gradient(90deg, #315d89 8px, #7e8777 8px); }
```
